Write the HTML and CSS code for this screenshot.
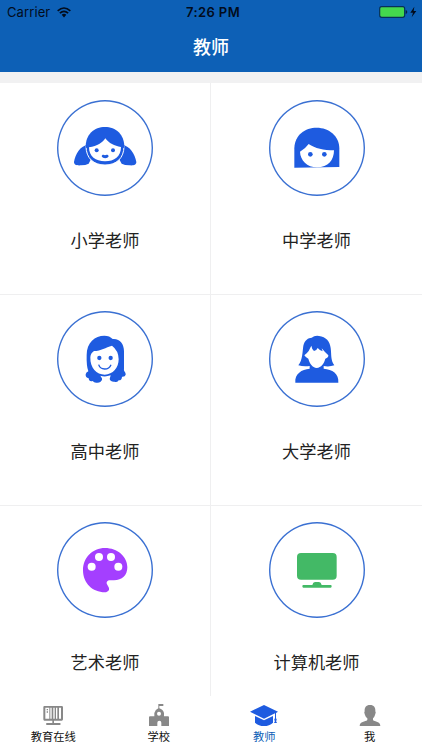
FILE: index.html
```html
<!DOCTYPE html>
<html lang="zh-CN">
<head>
  <meta charset="UTF-8">
  <title>教师</title>
  <link rel="stylesheet" href="styles.css">
</head>
<body>
  <header>
    <div class="status">
      <div class="carrier">
        <span>Carrier</span>
        <svg class="wifi" viewBox="0 0 42 32">
          <path d="M2 11Q21-6 40 11M8.500 18Q21 7 33.500 18" fill="none" stroke="#020c1c" stroke-width="5"/>
          <path d="M14 23Q21 17 28 23L21 31Z" fill="#020c1c"/>
        </svg>
      </div>
      <div class="time">7:26 PM</div>
      <div class="power">
        <svg viewBox="0 0 114 36">
          <rect x="2" y="2" width="75" height="32" rx="6" fill="#44d84d" stroke="#07305a" stroke-width="3.500"/>
          <path d="M80 12q5 1 5 6t-5 6z" fill="#07203f"/>
          <path d="M106 2L94 20h8l-4 14 14-19h-8z" fill="#020c1c"/>
        </svg>
      </div>
    </div>
    <h1>教师</h1>
  </header>

  <main class="grid">
    <div class="cell">
      <div class="circle">
        <svg viewBox="22 15 288 288" fill="#1e5be0">
          <path d="M112 150C93 153 77 176 73 201C73 210 82 212 94 211Q108 211 117 206L130 180ZM220 150C239 153 256 176 260 201C260 210 251 212 239 211Q225 211 216 206L202 180Z"/>
          <path d="M109 153H223C223 190 200 210 166 210S109 190 109 153Z" stroke="#fff" stroke-width="3"/>
          <path d="M108 158C107 118 134 96 166 96S225 118 224 158L210 160H122Z"/>
          <path d="M118 157C144 153 157 144 167 130C178 145 194 153 214 156C214 184 194 199 166 199S118 184 118 157Z" fill="#fff"/>
          <circle cx="141" cy="166" r="6"/>
          <circle cx="190" cy="166" r="6"/>
          <path d="M156 184C156 178 163 178 166 181C170 178 177 179 177 184C174 192 159 192 156 184Z"/>
        </svg>
      </div>
      <p>小学老师</p>
    </div>
    <div class="cell">
      <div class="circle">
        <svg viewBox="26 15 288 288" fill="#1e5be0">
          <path d="M102 218V158C104 120 134 98 169 98C206 98 237 123 237 160V216Z"/>
          <path d="M119 170Q134 162 145 147C164 160 190 166 221 166C221 195 204 217 170 217C140 217 120 196 119 170Z" fill="#fff"/>
          <circle cx="150" cy="178" r="7"/>
          <circle cx="192" cy="178" r="7"/>
        </svg>
      </div>
      <p>中学老师</p>
    </div>
    <div class="cell">
      <div class="circle">
        <svg viewBox="22 18 288 288" fill="#1e5be0">
          <path d="M111 150C111 113 136 92 164 92Q180 92 189 102C210 100 223 116 223 139V193C221 199 229 201 228 209Q226 216 217 215Q217 226 207 226Q204 233 194 230Q183 231 180 222L183 211Q166 217 152 212L158 222Q155 233 143 233Q134 235 129 228Q118 231 117 220Q107 218 108 208Q109 202 116 199Q110 183 111 150Z"/>
          <path d="M122 157Q123 144 133 138C154 138 168 127 187 122Q207 137 207 163C207 188 190 209 165 209C141 209 121 190 122 157Z" fill="#fff"/>
          <path d="M157 216Q168 218 178 215V236H157Z" fill="#fff"/>
          <circle cx="149" cy="159" r="6.500"/>
          <circle cx="183" cy="159" r="6.500"/>
          <path d="M147 179Q151 192 165 192T184 179" fill="none" stroke="#1e5be0" stroke-width="4"/>
        </svg>
      </div>
      <p>高中老师</p>
    </div>
    <div class="cell">
      <div class="circle">
        <svg viewBox="26 18 288 288" fill="#1e5be0">
          <path d="M114 181C127 164 126 143 129 122C133 104 144 99 154 98Q163 91 176 93C197 95 209 110 211 129C214 149 210 164 222 181Q207 186 190 183V191C216 193 236 205 234 233H105C103 206 124 193 148 191V183Q128 185 114 181Z"/>
          <path d="M132 151Q140 145 145 138L153 122Q154 131 161 138Q169 136 172 129Q179 137 187 139L184 130L194 141L204 151Q205 158 195 161C191 176 183 187 169 189C156 187 148 176 144 161Q135 157 132 151Z" fill="#fff"/>
        </svg>
      </div>
      <p>大学老师</p>
    </div>
    <div class="cell">
      <div class="circle">
        <svg viewBox="22 21 288 288">
          <path d="M166 99C203 99 233 124 233 157C233 181 217 196 193 196H181C173 196 169 202 172 208L177 217C181 225 175 232 166 232C128 232 100 204 100 166C100 128 128 99 166 99Z" fill="#a43fff"/>
          <g fill="#fff">
            <circle cx="126" cy="155" r="12"/>
            <circle cx="148" cy="126" r="12"/>
            <circle cx="184" cy="126" r="12"/>
            <circle cx="206" cy="155" r="12"/>
          </g>
        </svg>
      </div>
      <p>艺术老师</p>
    </div>
    <div class="cell">
      <div class="circle">
        <svg viewBox="26 21 288 288" fill="#43b966">
          <rect x="110" y="114" width="119" height="80" rx="12"/>
          <path d="M129 210H156Q158 201 164 201H176Q182 201 184 210H211Q214 210 214 214T211 218H129Q126 218 126 214T129 210Z"/>
        </svg>
      </div>
      <p>计算机老师</p>
    </div>
  </main>

  <nav>
    <a class="tab">
      <svg viewBox="0 0 90 72" fill="#888">
        <path d="M19 6H71Q75 6 75 10V46Q75 50 71 50H48V57H65Q68 57 68 60T65 63H27Q24 63 24 60T27 57H43V50H19Q16 50 16 46V10Q16 6 19 6Z"/>
        <path d="M22 11H34V44H22ZM37 11H41V44H37ZM46 11H50V44H46ZM54 11H58V44H54ZM63 11H69V44H63Z" fill="#fff"/>
        <path d="M26 15h4v4h-4zM26 22h4v4h-4z"/>
      </svg>
      <span>教育在线</span>
    </a>
    <a class="tab">
      <svg viewBox="0 0 90 72" fill="#888">
        <path d="M43 0H58V6H46V13Q57 16 60 27V37H72Q75 37 75 40V66H52V56Q52 50 46 50T40 56V66H15V40Q15 37 18 37H31V27Q34 16 43 13Z"/>
        <circle cx="45" cy="29" r="6" fill="#fff"/>
      </svg>
      <span>学校</span>
    </a>
    <a class="tab active">
      <svg viewBox="0 0 90 72" fill="#1e5be0">
        <path d="M3 23L45 3L87 23L81 27V43Q85 47 81 51L84 57H75L78 51Q74 47 78 43V28L45 44Z"/>
        <path d="M18 36L45 49L72 36V56Q61 66 45 66T18 56Z"/>
      </svg>
      <span>教师</span>
    </a>
    <a class="tab">
      <svg viewBox="0 0 90 72" fill="#888">
        <path d="M45 3C57 3 62 11 61 22Q64 24 60 33Q58 40 54 43V48C59 54 76 51 76 66H14C14 51 31 54 37 48V43Q32 40 30 33Q26 24 29 22C28 11 33 3 45 3Z"/>
      </svg>
      <span>我</span>
    </a>
  </nav>
</body>
</html>
```

FILE: styles.css
```css
* {
  box-sizing: border-box;
}
body {
  margin: 0;
  height: 750px;
  display: flex;
  flex-direction: column;
  overflow: hidden;
  background: #fff;
  font-family: Inter, "Noto Sans CJK SC", sans-serif;
  color: #222;
}
header {
  height: 72px;
  background: #0d60b6;
}
.status {
  display: grid;
  grid-template-columns: 1fr 1fr 1fr;
  align-items: center;
  height: 24px;
  padding: 0 5px 0 7px;
  font-size: 13px;
  color: #020c1c;
}
.carrier {
  display: flex;
  align-items: center;
  gap: 7px;
  letter-spacing: 0.1px;
}
.wifi {
  width: 14px;
  height: 11px;
}
.time {
  padding-left: 2px;
  text-align: center;
  font-weight: 600;
  letter-spacing: 0.4px;
}
.power {
  display: flex;
  justify-content: flex-end;
}
.power svg {
  width: 38px;
  height: 12px;
}
h1 {
  margin: 0;
  line-height: 48px;
  text-align: center;
  font-size: 18px;
  font-weight: 500;
  color: #fff;
}
.grid {
  display: grid;
  grid-template-columns: 211px 211px;
  grid-template-rows: 212px 211px 190px;
  height: 624px;
  border-top: 11px solid #f1f1f2;
}
.cell {
  display: flex;
  flex-direction: column;
  align-items: center;
  padding-top: 16px;
  border-bottom: 1px solid #efeff0;
}
.cell:nth-child(odd) {
  border-right: 1px solid #efeff0;
}
.cell:nth-child(-n+2) {
  padding-top: 17px;
}
.cell:nth-child(n+5) {
  border-bottom: none;
}
.circle {
  width: 96px;
  height: 96px;
  border-radius: 50%;
  box-shadow: inset 0 0 0 1.4px #3a70d2;
}
.circle svg {
  display: block;
  width: 96px;
  height: 96px;
}
.cell p {
  margin: 32px 0 0;
  font-size: 17.2px;
  line-height: 25px;
}
nav {
  flex: 1;
  display: grid;
  grid-template-columns: repeat(4, 1fr);
}
.tab {
  display: flex;
  flex-direction: column;
  align-items: center;
  padding: 8px 0 0 1px;
  font-size: 11.3px;
  line-height: 18px;
  color: #111;
}
.tab svg {
  width: 30px;
  height: 24px;
}
.tab.active {
  color: #0d60b6;
}
```
